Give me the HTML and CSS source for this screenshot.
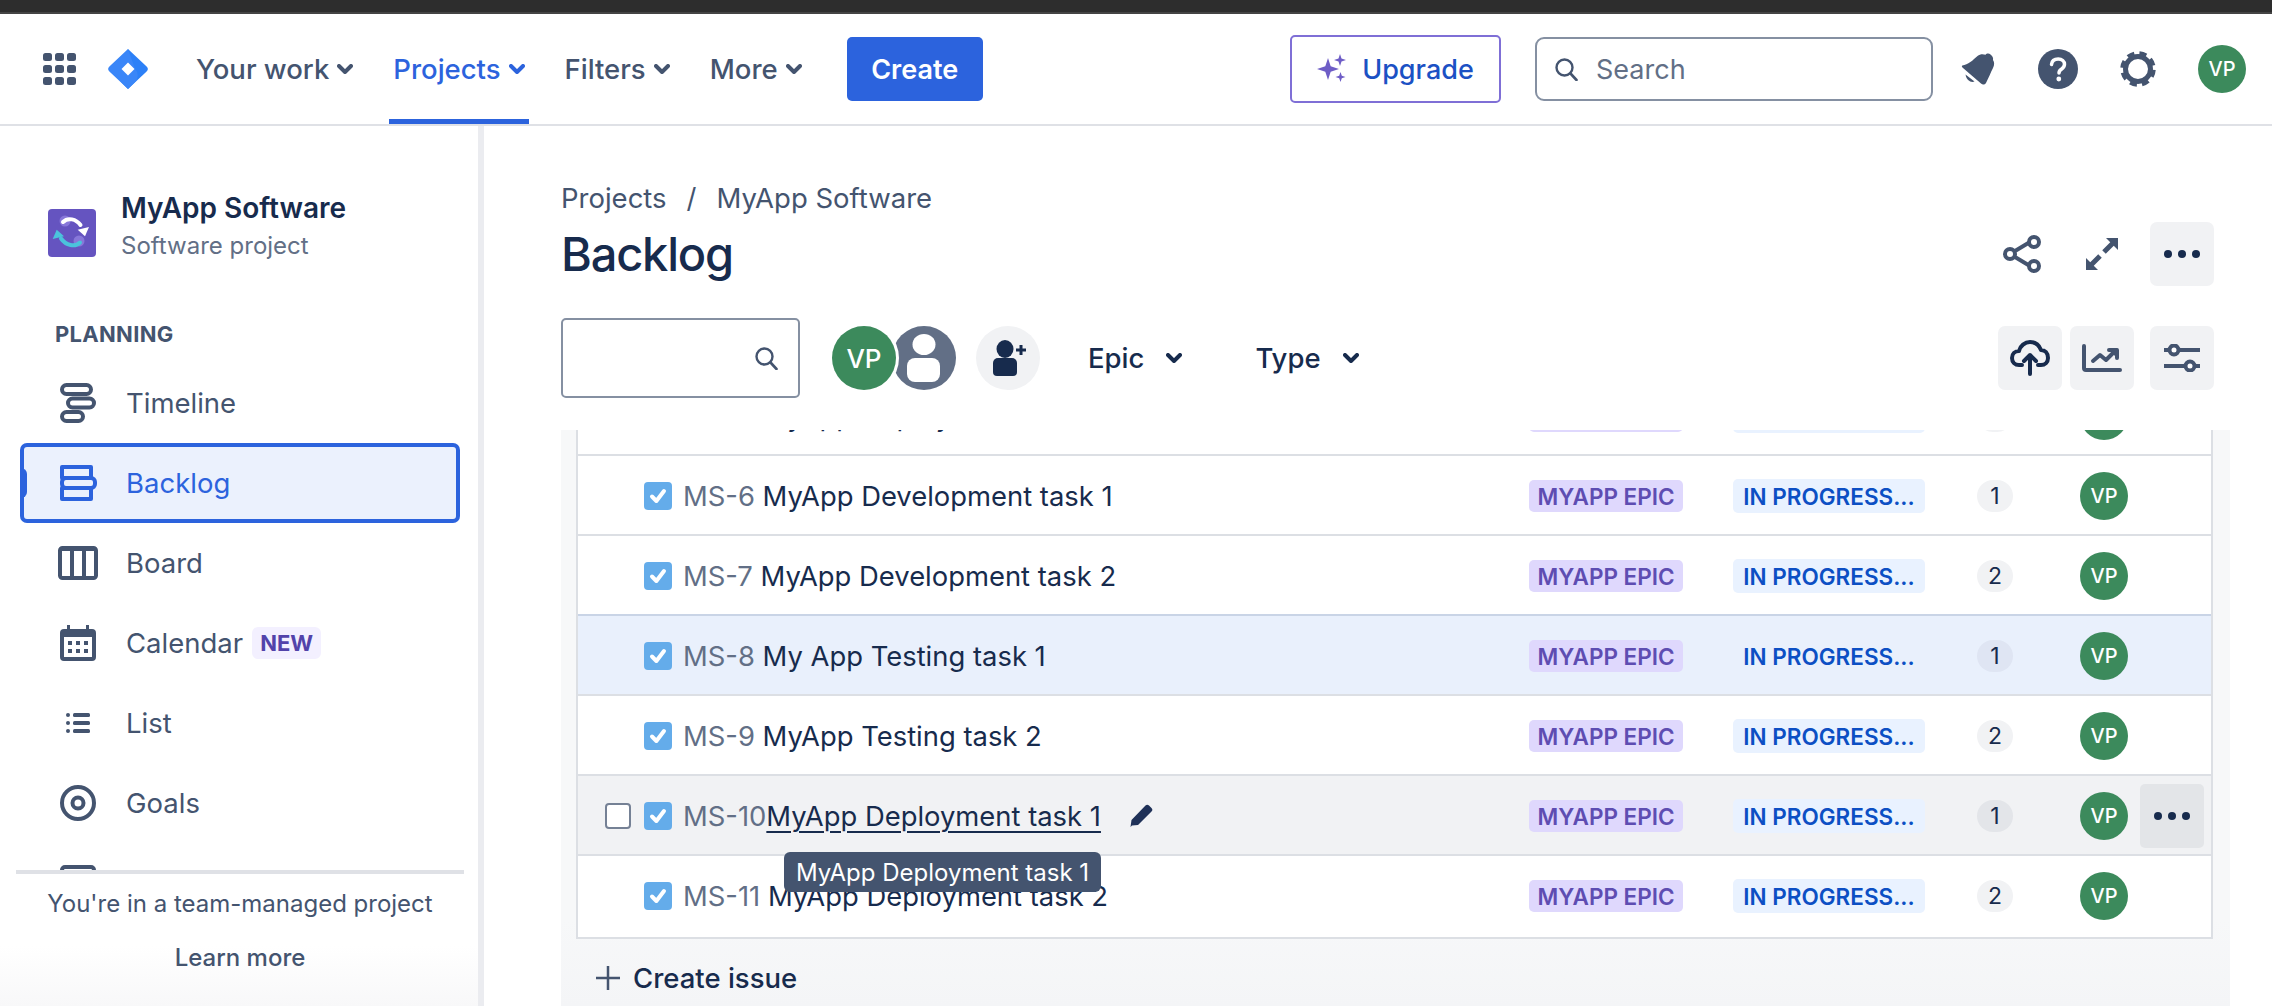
FILE: index.html
```html
<!DOCTYPE html>
<html lang="en">
<head>
  <meta charset="UTF-8">
  <title>Backlog - MyApp Software</title>
  <link rel="stylesheet" href="styles.css">
</head>
<body>
  <svg class="defs">
    <symbol id="chev" viewBox="0 0 16 10"><path d="M2 2l6 6 6-6" fill="none" stroke="currentColor" stroke-width="4" stroke-linecap="round" stroke-linejoin="round"/></symbol>
    <symbol id="lens" viewBox="0 0 24 24"><circle cx="10.5" cy="10.5" r="8" fill="none" stroke="currentColor" stroke-width="2.4"/><path d="M16.5 16.5l6 6.5" fill="none" stroke="currentColor" stroke-width="2.6" stroke-linecap="round"/></symbol>
    <symbol id="dots" viewBox="0 0 36 8"><circle cx="4" cy="4" r="4"/><circle cx="18" cy="4" r="4"/><circle cx="32" cy="4" r="4"/></symbol>
    <symbol id="check" viewBox="0 0 28 28"><rect width="28" height="28" rx="4" fill="#64acea"/><path d="M8 14.5l4.4 4.5L20 9" fill="none" stroke="#fff" stroke-width="4" stroke-linecap="round" stroke-linejoin="round"/></symbol>
  </svg>

  <div class="window-strip"></div>

  <header class="topbar">
    <svg class="icon-apps" width="33" height="32" viewBox="0 0 33 32" fill="#44546f">
      <rect width="9" height="8" rx="2.5"/><rect x="12" width="9" height="8" rx="2.5"/><rect x="24" width="9" height="8" rx="2.5"/>
      <rect y="12" width="9" height="8" rx="2.5"/><rect x="12" y="12" width="9" height="8" rx="2.5"/><rect x="24" y="12" width="9" height="8" rx="2.5"/>
      <rect y="24" width="9" height="8" rx="2.5"/><rect x="12" y="24" width="9" height="8" rx="2.5"/><rect x="24" y="24" width="9" height="8" rx="2.5"/>
    </svg>
    <svg class="logo" width="40" height="40" viewBox="0 0 40 40">
      <path d="M20 0l18.600 17.600a3.300 3.300 0 0 1 0 4.800L20 40l-7-7a9 9 0 0 1 0-13z" fill="#2c80f7"/>
      <path d="M20 0L1.400 17.600a3.300 3.300 0 0 0 0 4.800L20 40l7-7a9 9 0 0 0 0-13z" fill="#3a86f8"/>
      <path d="M20 13.500l6.500 6.500-6.500 6.500-6.500-6.500z" fill="#fff"/>
    </svg>
    <nav class="topnav">
      <a class="topnav-item">Your work <svg class="chev"><use href="#chev"/></svg></a>
      <a class="topnav-item active">Projects <svg class="chev"><use href="#chev"/></svg></a>
      <a class="topnav-item">Filters <svg class="chev"><use href="#chev"/></svg></a>
      <a class="topnav-item">More <svg class="chev"><use href="#chev"/></svg></a>
    </nav>
    <button class="btn-create">Create</button>

    <button class="btn-upgrade">
      <svg width="30" height="30" viewBox="0 0 30 30" fill="#6e5dc6">
        <path d="M11 4l2.700 8.300L22 15l-8.300 2.700L11 26l-2.700-8.300L0 15l8.300-2.700z"/>
        <path d="M23 0l1.500 4.500L29 6l-4.500 1.500L23 12l-1.500-4.500L17 6l4.500-1.500z"/>
        <path d="M23.500 18l1.300 3.700 3.700 1.300-3.700 1.300-1.300 3.700-1.300-3.700-3.700-1.300 3.700-1.300z"/>
      </svg>
      Upgrade
    </button>
    <div class="global-search">
      <svg class="lens" width="24" height="24"><use href="#lens"/></svg>
      <span>Search</span>
    </div>
    <svg class="icon-bell" width="34" height="32" viewBox="0 0 34 32" fill="#44546f">
      <path d="M1.300 12.500C7 12 12 7 16.500 3 19 1 22 1 24.500 1.800 25.500.3 28 0 29.500 1.500 31.500 3 32.500 5 32 7 33.500 9 33.500 12 32 15 29.500 20 28 24 25 30 23.500 32 21.500 32 20 30.500L2 15C.8 14 .5 13 1.300 12.500z"/>
      <path d="M4.500 21.500l9 7c-3.500 1.500-8-1-9-7z"/>
    </svg>
    <svg class="icon-help" width="40" height="40" viewBox="0 0 40 40">
      <circle cx="20" cy="20" r="20" fill="#44546f"/>
      <path d="M13.500 15.500c.4-3.600 3-5.500 6.700-5.500 3.800 0 6.300 2.200 6.300 5.300 0 2.400-1.300 3.700-3.100 4.900-1.700 1.100-2.400 1.900-2.400 3.800" fill="none" stroke="#fff" stroke-width="3.500" stroke-linecap="round"/>
      <circle cx="20.800" cy="30" r="2.400" fill="#fff"/>
    </svg>
    <svg class="icon-gear" width="36" height="36" viewBox="0 0 36 36" fill="none" stroke="#44546f">
      <circle cx="18" cy="18" r="12.500" stroke-width="5"/>
      <circle cx="18" cy="18" r="15.500" stroke-width="4.500" stroke-dasharray="7 5.170" stroke-dashoffset="-1"/>
    </svg>
    <span class="avatar">VP</span>
  </header>

  <div class="layout">
    <aside class="sidebar">
      <div class="project">
        <svg width="48" height="48" viewBox="0 0 48 48">
          <rect width="48" height="48" rx="4" fill="#6554c0"/>
          <circle cx="17" cy="12" r="5.500" fill="#8777d9"/>
          <circle cx="31" cy="32" r="5.500" fill="#8777d9"/>
          <path d="M15 13c5-5 13-3 17.500 3" fill="none" stroke="#fff" stroke-width="4" stroke-linecap="round"/>
          <path d="M41 18l-4 9.300-7.300-6.600z" fill="#fff"/>
          <path d="M32 33.500c-5 5-14 3-19-4" fill="none" stroke="#4bc3dc" stroke-width="4" stroke-linecap="round"/>
          <path d="M8.700 20.700L4.700 30 16 27.300z" fill="#4bc3dc"/>
        </svg>
        <div class="project-text">
          <div class="project-name">MyApp Software</div>
          <div class="project-type">Software project</div>
        </div>
      </div>
      <div class="side-title">PLANNING</div>
      <nav class="sidenav">
        <a class="side-item">
          <svg width="40" height="40" viewBox="0 0 40 40" fill="none" stroke="currentColor" stroke-width="4">
            <rect x="4" y="2" width="29" height="9" rx="4.500"/><rect x="10" y="15.500" width="26" height="9" rx="4.500"/><rect x="4" y="29" width="21" height="9" rx="4.500"/>
          </svg>
          Timeline
        </a>
        <a class="side-item active">
          <svg width="40" height="40" viewBox="0 0 40 40" fill="none" stroke="currentColor" stroke-width="4" stroke-linejoin="round">
            <rect x="4" y="4" width="29" height="11"/><rect x="4" y="15" width="33" height="10" rx="4"/><rect x="4" y="25" width="29" height="11"/>
          </svg>
          Backlog
        </a>
        <a class="side-item">
          <svg width="40" height="40" viewBox="0 0 40 40" fill="none" stroke="currentColor" stroke-width="4">
            <rect x="2" y="5" width="36" height="30" rx="2.500"/><path d="M14 5v30M26 5v30"/><path d="M2 6.500h36" stroke-width="3"/>
          </svg>
          Board
        </a>
        <a class="side-item">
          <svg width="40" height="40" viewBox="0 0 40 40" fill="currentColor">
            <path d="M9 2h3v4h16V2h3v4h3a4 4 0 0 1 4 4v24a4 4 0 0 1-4 4H6a4 4 0 0 1-4-4V10a4 4 0 0 1 4-4h3zM6 14v20h28V14z"/>
            <rect x="10" y="18" width="4" height="4"/><rect x="18" y="18" width="4" height="4"/><rect x="26" y="18" width="4" height="4"/>
            <rect x="10" y="26" width="4" height="4"/><rect x="18" y="26" width="4" height="4"/><rect x="26" y="26" width="4" height="4"/>
          </svg>
          Calendar
          <span class="tag-new">NEW</span>
        </a>
        <a class="side-item">
          <svg width="40" height="40" viewBox="0 0 40 40" fill="currentColor">
            <circle cx="10" cy="12" r="2"/><circle cx="10" cy="20" r="2"/><circle cx="10" cy="28" r="2"/>
            <rect x="15" y="10" width="17" height="4" rx="1.500"/><rect x="15" y="18" width="17" height="4" rx="1.500"/><rect x="15" y="26" width="17" height="4" rx="1.500"/>
          </svg>
          List
        </a>
        <a class="side-item">
          <svg width="40" height="40" viewBox="0 0 40 40" fill="none" stroke="currentColor" stroke-width="4">
            <circle cx="20" cy="20" r="16"/><circle cx="20" cy="20" r="5.500"/>
          </svg>
          Goals
        </a>
        <a class="side-item">
          <svg width="40" height="40" viewBox="0 0 40 40" fill="none" stroke="currentColor" stroke-width="4">
            <rect x="4" y="4" width="32" height="32" rx="3"/><path d="M12 20l6 6 10-12"/>
          </svg>
          Issues
        </a>
      </nav>
      <div class="side-foot">
        <p>You're in a team-managed project</p>
        <a>Learn more</a>
      </div>
    </aside>

    <main class="main">
      <div class="crumbs"><span>Projects</span><span class="crumb-sep">/</span><span>MyApp Software</span></div>
      <div class="title-row">
        <h1>Backlog</h1>
        <div class="tools">
          <button class="tool">
            <svg width="40" height="40" viewBox="0 0 40 40" fill="none" stroke="#44546f" stroke-width="4">
              <path d="M8 20l20-12M8 20l20 12"/><circle cx="8" cy="20" r="5" fill="#fff"/><circle cx="32" cy="8" r="5" fill="#fff"/><circle cx="32" cy="32" r="5" fill="#fff"/>
            </svg>
          </button>
          <button class="tool">
            <svg width="40" height="40" viewBox="0 0 40 40" fill="none" stroke="#44546f" stroke-width="5">
              <path d="M22 18l10-10M18 22L8 32"/>
              <path d="M24 4h12v12z" fill="#44546f" stroke="none"/><path d="M4 24v12h12z" fill="#44546f" stroke="none"/>
            </svg>
          </button>
          <button class="tool filled"><svg class="dots" width="36" height="8"><use href="#dots"/></svg></button>
        </div>
      </div>

      <div class="toolbar">
        <div class="filter-search"><svg class="lens" width="24" height="24"><use href="#lens"/></svg></div>
        <span class="avatar big">VP</span>
        <span class="avatar-ghost">
          <svg width="64" height="64" viewBox="0 0 64 64">
            <circle cx="32" cy="32" r="32" fill="#626f86"/>
            <ellipse cx="32" cy="18.500" rx="11.500" ry="10.500" fill="#fff"/>
            <rect x="15" y="32" width="33" height="24" rx="8" fill="#fff"/>
          </svg>
        </span>
        <span class="add-person">
          <svg width="38" height="36" viewBox="0 0 38 36" fill="#172b4d">
            <ellipse cx="16" cy="9" rx="8.500" ry="9"/>
            <path d="M4 23a5 5 0 0 1 5-5h14a5 5 0 0 1 5 5v9a4 4 0 0 1-4 4H8a4 4 0 0 1-4-4z"/>
            <path d="M30.500 5h3v3.500H37v3h-3.500V15h-3v-3.500H27v-3h3.500z"/>
          </svg>
        </span>
        <button class="filter-btn first">Epic <svg class="chev"><use href="#chev"/></svg></button>
        <button class="filter-btn">Type <svg class="chev"><use href="#chev"/></svg></button>
        <div class="tools end">
          <button class="tool filled">
            <svg width="40" height="36" viewBox="0 0 40 36" fill="none" stroke="#172b4d" stroke-width="4" stroke-linecap="round" stroke-linejoin="round">
              <path d="M12 25H9C5 25 2 22 2 18c0-4 3-7 7-7 1-5 6-9 11-9s9 3 11 8c4 0 7 3 7 8 0 4-3 7-7 7h-3"/>
              <path d="M20 34V15M14 21l6-6 6 6"/>
            </svg>
          </button>
          <button class="tool filled wide-gap">
            <svg width="40" height="28" viewBox="0 0 40 28" fill="none" stroke="#44546f" stroke-width="4" stroke-linecap="round" stroke-linejoin="round">
              <path d="M2 2v22a2 2 0 0 0 2 2h34"/>
              <path d="M11 17l7-6 6 5 10-10"/><path d="M27 6h8v8" fill="#44546f"/>
            </svg>
          </button>
          <button class="tool filled">
            <svg width="36" height="28" viewBox="0 0 36 28" fill="#fff" stroke="#44546f" stroke-width="4">
              <path d="M0 6h36M0 22h36"/><circle cx="10" cy="6" r="4.500"/><circle cx="26" cy="22" r="4.500"/>
            </svg>
          </button>
        </div>
      </div>

      <section class="panel">
        <div class="list">
          <div class="row first">
            <span></span><svg class="cb"><use href="#check"/></svg>
            <div class="summary"><span class="key">MS-5</span> MyApp Deployment task</div>
            <span class="epic">MYAPP EPIC</span><span class="status">IN PROGRESS...</span><span class="points">2</span><span class="avatar">VP</span>
          </div>
          <div class="row">
            <span></span><svg class="cb"><use href="#check"/></svg>
            <div class="summary"><span class="key">MS-6</span> MyApp Development task 1</div>
            <span class="epic">MYAPP EPIC</span><span class="status">IN PROGRESS...</span><span class="points">1</span><span class="avatar">VP</span>
          </div>
          <div class="row">
            <span></span><svg class="cb"><use href="#check"/></svg>
            <div class="summary"><span class="key">MS-7</span> MyApp Development task 2</div>
            <span class="epic">MYAPP EPIC</span><span class="status">IN PROGRESS...</span><span class="points">2</span><span class="avatar">VP</span>
          </div>
          <div class="row selected">
            <span></span><svg class="cb"><use href="#check"/></svg>
            <div class="summary"><span class="key">MS-8</span> My App Testing task 1</div>
            <span class="epic">MYAPP EPIC</span><span class="status">IN PROGRESS...</span><span class="points">1</span><span class="avatar">VP</span>
          </div>
          <div class="row">
            <span></span><svg class="cb"><use href="#check"/></svg>
            <div class="summary"><span class="key">MS-9</span> MyApp Testing task 2</div>
            <span class="epic">MYAPP EPIC</span><span class="status">IN PROGRESS...</span><span class="points">2</span><span class="avatar">VP</span>
          </div>
          <div class="row hover">
            <span class="cb-empty"></span><svg class="cb"><use href="#check"/></svg>
            <div class="summary"><span class="key">MS-10</span> <u>MyApp Deployment task 1</u><svg class="pencil" width="24" height="24" viewBox="0 0 24 24"><path d="M16.500 1.500a2.500 2.500 0 0 1 3.500 0l2.500 2.500a2.500 2.500 0 0 1 0 3.500L9 21l-6 .5L1.500 23 2.500 16z" fill="#1f3158"/></svg></div>
            <span class="epic">MYAPP EPIC</span><span class="status">IN PROGRESS...</span><span class="points">1</span><span class="avatar">VP</span>
            <button class="row-more"><svg class="dots" width="36" height="8"><use href="#dots"/></svg></button>
            <div class="tooltip">MyApp Deployment task 1</div>
          </div>
          <div class="row last">
            <span></span><svg class="cb"><use href="#check"/></svg>
            <div class="summary"><span class="key">MS-11</span> MyApp Deployment task 2</div>
            <span class="epic">MYAPP EPIC</span><span class="status">IN PROGRESS...</span><span class="points">2</span><span class="avatar">VP</span>
          </div>
        </div>
        <div class="create-issue">
          <svg width="24" height="24" viewBox="0 0 24 24" fill="none" stroke="#44546f" stroke-width="2.500"><path d="M12 0v24M0 12h24"/></svg>
          Create issue
        </div>
      </section>
    </main>
  </div>
</body>
</html>
```

FILE: styles.css
```css
* {
  box-sizing: border-box;
}
html, body {
  margin: 0;
  height: 1006px;
  overflow: hidden;
}
body {
  font-family: Inter, "Liberation Sans", sans-serif;
  color: #172b4d;
  background: #fff;
}
button {
  font: inherit;
  border: 0;
  background: none;
  padding: 0;
}
.defs {
  display: none;
}

.window-strip {
  height: 14px;
  background: #2d2d2d;
  border-bottom: 2px solid #444;
}

/* top bar */
.topbar {
  height: 112px;
  display: flex;
  align-items: center;
  padding: 0 26px 0 43px;
  border-bottom: 2px solid #dfe1e6;
}
.logo {
  margin-left: 32px;
}
.topnav {
  display: flex;
  align-self: stretch;
  gap: 32px;
  margin-left: 44px;
}
.topnav-item {
  display: flex;
  align-items: center;
  gap: 8px;
  padding: 5px 4px 0;
  font-size: 27.5px;
  font-weight: 500;
  color: #44546f;
  border-bottom: 5px solid transparent;
}
.topnav-item.active {
  color: #2c63dd;
  border-bottom-color: #2c63dd;
}
.chev {
  width: 16px;
  height: 10px;
  flex: none;
}
.btn-create {
  margin-left: 41px;
  width: 136px;
  height: 64px;
  background: #2c63dd;
  color: #fff;
  font-size: 27px;
  font-weight: 600;
  border-radius: 5px;
}
.btn-upgrade {
  margin-left: auto;
  width: 211px;
  height: 68px;
  display: flex;
  align-items: center;
  justify-content: center;
  gap: 15px;
  border: 2px solid #7f6fd6;
  border-radius: 5px;
  color: #1b51c4;
  font-size: 27px;
  font-weight: 500;
}
.global-search {
  margin-left: 34px;
  width: 398px;
  height: 64px;
  display: flex;
  align-items: center;
  gap: 18px;
  padding-left: 17px;
  border: 2px solid #8590a2;
  border-radius: 9px;
  color: #626f86;
  font-size: 27px;
}
.lens {
  color: #44546f;
}
.icon-bell {
  margin-left: 28px;
}
.icon-help {
  margin-left: 43px;
}
.icon-gear {
  margin-left: 42px;
}
.topbar .avatar {
  margin-left: 42px;
}
.avatar {
  width: 48px;
  height: 48px;
  border-radius: 50%;
  background: #3c8a5c;
  color: #fff;
  font-size: 20px;
  font-weight: 500;
  display: flex;
  align-items: center;
  justify-content: center;
  flex: none;
}
.avatar.big {
  width: 64px;
  height: 64px;
  font-size: 26px;
  position: relative;
  z-index: 1;
  box-shadow: 0 0 0 3px #fff;
}

.layout {
  display: flex;
  height: 880px;
}

/* sidebar */
.sidebar {
  width: 484px;
  flex: none;
  display: flex;
  flex-direction: column;
  border-right: 6px solid #ebecf0;
  background: linear-gradient(#fff 820px, #f8f8f9);
}
.project {
  display: flex;
  align-items: center;
  gap: 25px;
  padding: 75px 0 0 48px;
}
.project-name {
  font-size: 28px;
  font-weight: 600;
  line-height: 34px;
  margin-top: -10px;
}
.project-type {
  font-size: 24px;
  color: #626f86;
  line-height: 36px;
  margin-top: 3px;
}
.side-title {
  margin: 57px 0 0 55px;
  font-size: 22px;
  font-weight: 700;
  line-height: 26px;
  letter-spacing: 0.3px;
  color: #44546f;
}
.sidenav {
  flex: 1;
  min-height: 0;
  overflow: hidden;
  margin: 16px 0 0 20px;
  width: 440px;
}
.side-item {
  height: 80px;
  display: flex;
  align-items: center;
  gap: 28px;
  padding-left: 38px;
  font-size: 27.5px;
  color: #44546f;
  position: relative;
  flex: none;
}
.side-item.active {
  color: #2c63dd;
  background: #ebf1fd;
  border-radius: 7px;
  box-shadow: inset 0 0 0 4px #2c63dd;
}
.side-item.active::before {
  content: "";
  position: absolute;
  left: 0;
  top: 25px;
  width: 7px;
  height: 30px;
  background: #2c63dd;
  border-radius: 0 6px 6px 0;
}
.tag-new {
  margin-left: -19px;
  width: 69px;
  height: 32px;
  border-radius: 6px;
  background: #f3f0ff;
  color: #5243aa;
  font-size: 22px;
  font-weight: 700;
  display: flex;
  align-items: center;
  justify-content: center;
}
.side-foot {
  margin: 0 14px 0 16px;
  height: 136px;
  border-top: 4px solid #dfe1e6;
  text-align: center;
  color: #44546f;
}
.side-foot p {
  margin: 14px 0 0;
  font-size: 24px;
  line-height: 32px;
}
.side-foot a {
  display: block;
  margin-top: 22px;
  font-size: 24px;
  font-weight: 500;
  line-height: 32px;
}

/* main column */
.main {
  flex: 1;
  min-width: 0;
  padding: 54px 42px 0 77px;
  display: flex;
  flex-direction: column;
}
.crumbs {
  display: flex;
  font-size: 27.5px;
  line-height: 36px;
  color: #44546f;
}
.crumb-sep {
  margin: 0 20px;
}
.title-row {
  margin-top: 6px;
  display: flex;
  align-items: center;
  justify-content: space-between;
  padding-right: 16px;
}
h1 {
  margin: 0;
  font-size: 47px;
  font-weight: 500;
  line-height: 64px;
  letter-spacing: -1.2px;
  color: #172b4d;
}
.tools {
  display: flex;
  gap: 16px;
}
.tool {
  width: 64px;
  height: 64px;
  border-radius: 7px;
  display: flex;
  align-items: center;
  justify-content: center;
}
.tool.filled {
  background: #f1f2f4;
}
.tool.wide-gap {
  margin-left: -8px;
}
.dots {
  fill: #172b4d;
}
.toolbar {
  margin-top: 32px;
  display: flex;
  align-items: center;
  height: 80px;
  padding-right: 16px;
}
.filter-search {
  width: 239px;
  height: 80px;
  border: 2px solid #8590a2;
  border-radius: 5px;
  display: flex;
  align-items: center;
  justify-content: flex-end;
  padding-right: 20px;
  margin-right: 32px;
}
.avatar-ghost {
  width: 64px;
  height: 64px;
  margin-left: -4px;
  flex: none;
}
.add-person {
  width: 64px;
  height: 64px;
  margin-left: 20px;
  border-radius: 50%;
  background: #f1f2f4;
  display: flex;
  align-items: center;
  justify-content: center;
  flex: none;
}
.filter-btn {
  display: flex;
  align-items: center;
  gap: 22px;
  font-size: 27.5px;
  font-weight: 500;
  color: #172b4d;
  margin-left: 73px;
}
.filter-btn.first {
  margin-left: 48px;
}
.tools.end {
  margin-left: auto;
}

/* backlog panel */
.panel {
  margin-top: 32px;
  flex: 1;
  min-height: 0;
  padding: 0 17px 0 15px;
  background: linear-gradient(#f7f8f9 85%, #f4f5f7);
}
.list {
  height: 509px;
  overflow: hidden;
  border: 2px solid #dcdfe4;
  border-width: 0 2px 2px;
  background: #fff;
}
.row {
  height: 80px;
  display: grid;
  grid-template-columns: 39px 39px minmax(0, 1fr) 204px 244px 103px 60px 64px;
  align-items: center;
  padding: 2px 7px 0 27px;
  border-top: 2px solid #dcdfe4;
  position: relative;
  font-size: 27.4px;
  background: #fff;
}
.row.first {
  margin-top: -56px;
}
.row.last {
  height: 82px;
  padding-bottom: 2px;
}
.row.selected {
  background: #e9f0fc;
  border-top-color: #c9d4e6;
}
.row.hover {
  background: #f1f2f4;
}
.cb {
  width: 28px;
  height: 28px;
}
.cb-empty {
  width: 26px;
  height: 26px;
  border: 2px solid #758195;
  border-radius: 4px;
  background: #fff;
}
.summary {
  display: flex;
  align-items: center;
  white-space: pre;
  color: #172b4d;
}
.key {
  color: #626f86;
}
.summary u {
  text-underline-offset: 5px;
  text-decoration-thickness: 2px;
}
.pencil {
  margin-left: 28px;
}
.epic {
  width: 154px;
  height: 32px;
  border-radius: 5px;
  background: #dfd8fd;
  color: #5e4db2;
  font-size: 22.5px;
  font-weight: 600;
  display: flex;
  align-items: center;
  justify-content: center;
  white-space: nowrap;
}
.status {
  width: 192px;
  height: 34px;
  border-radius: 5px;
  background: #e9f2ff;
  color: #0c4fc4;
  font-size: 22.5px;
  font-weight: 600;
  display: flex;
  align-items: center;
  justify-content: center;
  white-space: nowrap;
}
.selected .status {
  background: transparent;
}
.points {
  width: 36px;
  height: 32px;
  border-radius: 16px;
  background: #f1f2f4;
  font-size: 23px;
  display: flex;
  align-items: center;
  justify-content: center;
}
.selected .points {
  background: #dfe5f3;
}
.hover .points {
  background: #e3e5e9;
}
.row-more {
  width: 64px;
  height: 64px;
  border-radius: 5px;
  background: #e3e5e8;
  display: flex;
  align-items: center;
  justify-content: center;
}
.tooltip {
  position: absolute;
  left: 206px;
  top: 76px;
  z-index: 2;
  width: 317px;
  height: 40px;
  border-radius: 6px;
  background: #44546f;
  color: #fff;
  font-size: 24px;
  display: flex;
  align-items: center;
  justify-content: center;
}
.create-issue {
  display: flex;
  align-items: center;
  gap: 13px;
  margin-top: 24px;
  padding-left: 20px;
  font-size: 27.5px;
  font-weight: 500;
  line-height: 30px;
}
```
